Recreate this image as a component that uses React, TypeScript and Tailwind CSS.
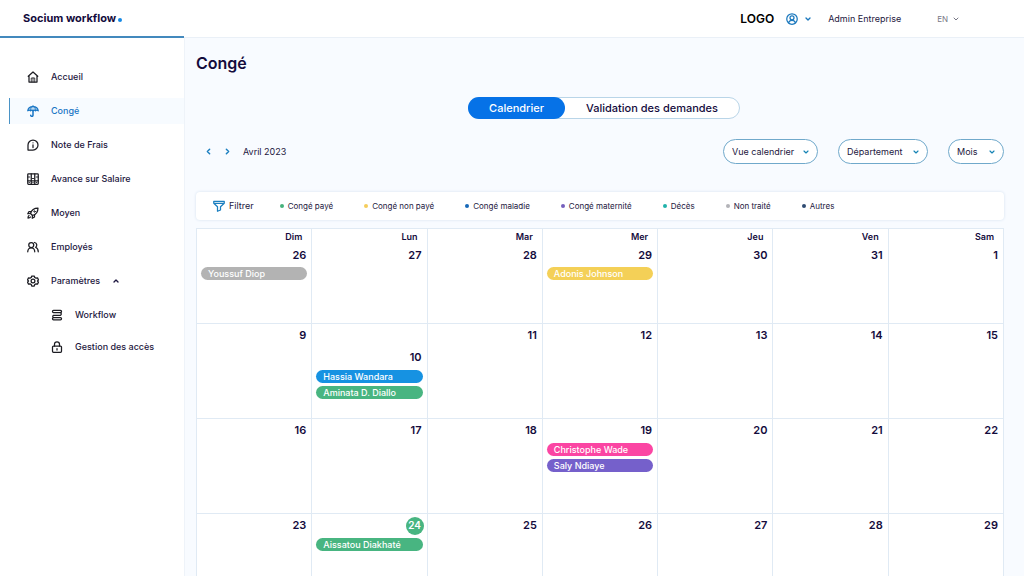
import type { ReactNode } from "react";
import { ChevronDown, ChevronLeft, ChevronRight, ChevronUp } from "lucide-react";

function Icon({ children, className = "size-3" }: { children: ReactNode; className?: string }) {
  return (
    <svg
      viewBox="0 0 24 24"
      className={`shrink-0 ${className}`}
      fill="none"
      stroke="currentColor"
      strokeWidth="2.5"
      strokeLinecap="round"
      strokeLinejoin="round"
      aria-hidden="true"
    >
      {children}
    </svg>
  );
}

const HomeIcon = (
  <Icon>
    <path d="M2.500 10.500 12 2l9.500 8.500M4 9.500V22h16V9.500" />
    <path d="M8.500 22v-8h7v8M12 14v8" strokeWidth="1.700" />
  </Icon>
);
const UmbrellaIcon = (
  <Icon>
    <path
      d="M12 3C6.500 3 2 6.500 1.500 11.500c2-1.500 4-1.500 5.500 0 1.500-1.500 3.500-1.500 5 0 1.500-1.500 3.500-1.500 5 0 1.500-1.500 3.500-1.500 5.500 0C22 6.500 17.500 3 12 3Z"
      fill="currentColor"
      fillOpacity="0.25"
    />
    <path d="M12 1v2M9 4c-1.500 2-2 4.500-2 7M15 4c1.500 2 2 4.500 2 7" strokeWidth="1.800" />
    <path d="M12 11v9.500a2.300 2.300 0 0 1-4.600 0" strokeWidth="3" />
  </Icon>
);
const NoteIcon = (
  <Icon>
    <path d="M2 22V12a10 10 0 1 1 10 10Z" />
    <path d="M12 11.500V17M12 7.500v.2" />
  </Icon>
);
const AbacusIcon = (
  <Icon>
    <rect x="1.500" y="1.500" width="21" height="21" rx="1.500" />
    <path d="M8.500 1.500v21M15.500 1.500v21M1.500 15.500h21" />
    <path d="M1.500 8h4M10.500 11h3M18.500 8h4M4 19h1M11.500 19h1M18.500 19h1" strokeWidth="1.800" />
  </Icon>
);
const RocketIcon = (
  <Icon>
    <path d="M7 13C9 6 14 2 22 2c0 8-4 13-11 15Z" />
    <path d="M8.500 9H4l-2.500 4.500L7 13M15 15.500V20l-4.500 2.500L11 17" />
    <path d="M4 17c-1.500 1-2 3-2 5 2 0 4-.5 5-2" />
    <circle cx="15" cy="9" r="1.500" strokeWidth="1.800" />
  </Icon>
);
const PeopleIcon = (
  <Icon>
    <circle cx="8.500" cy="8" r="5" />
    <path d="M1.500 21.500c0-4 3-8 7-8s7 4 7 8M15 3a5.200 5.200 0 0 1 2.200 9.500c3.300 1.500 5.300 5 5.300 9" />
  </Icon>
);
const GearIcon = (
  <Icon>
    <path d="M9.500 2h5l1 3 2.500 1.300 3-.5 2 4L21 12l2 2.200-2 4-3-.5-2.500 1.300-1 3h-5l-1-3L6 17.700l-3 .5-2-4L3 12 1 9.800l2-4 3 .5L8.500 5Z" />
    <circle cx="12" cy="12" r="3.800" />
  </Icon>
);
const FlowIcon = (
  <Icon>
    <rect x="3" y="2.500" width="18" height="4.500" rx="2" />
    <path d="M19 7c2 1.500 2 4 0 5.500H5c-2 1.500-2 3.500 0 4.500" />
    <rect x="3" y="17" width="18" height="4.500" rx="2" />
  </Icon>
);
const LockIcon = (
  <Icon>
    <rect x="3" y="10" width="18" height="12.500" rx="2" />
    <path d="M7 10V6.500a5 5 0 0 1 10 0V10M12 15v3" />
  </Icon>
);

const navItems = [
  { label: "Accueil", icon: HomeIcon },
  { label: "Congé", icon: UmbrellaIcon, active: true },
  { label: "Note de Frais", icon: NoteIcon },
  { label: "Avance sur Salaire", icon: AbacusIcon },
  { label: "Moyen", icon: RocketIcon },
  { label: "Employés", icon: PeopleIcon },
];

const subItems = [
  { label: "Workflow", icon: FlowIcon },
  { label: "Gestion des accès", icon: LockIcon },
];

const legend = [
  { label: "Congé payé", dot: "bg-[#46b17b]" },
  { label: "Congé non payé", dot: "bg-[#f5cd5b]" },
  { label: "Congé maladie", dot: "bg-[#1668b8]" },
  { label: "Congé maternité", dot: "bg-[#7560bd]" },
  { label: "Décès", dot: "bg-[#20b2aa]" },
  { label: "Non traité", dot: "bg-[#b3b3b8]" },
  { label: "Autres", dot: "bg-[#2f4b72]" },
];

const weekdays = ["Dim", "Lun", "Mar", "Mer", "Jeu", "Ven", "Sam"];

type Leave = { name: string; color: string };
type Day = { n: number; leaves?: Leave[]; today?: boolean; low?: boolean };

const weeks: Day[][] = [
  [
    { n: 26, leaves: [{ name: "Youssuf Diop", color: "bg-[#b3b3b3]" }] },
    { n: 27 },
    { n: 28 },
    { n: 29, leaves: [{ name: "Adonis Johnson", color: "bg-[#f4d057]" }] },
    { n: 30 },
    { n: 31 },
    { n: 1 },
  ],
  [
    { n: 9 },
    {
      n: 10,
      low: true,
      leaves: [
        { name: "Hassia Wandara", color: "bg-[#1692e2]" },
        { name: "Aminata D. Diallo", color: "bg-[#48b581]" },
      ],
    },
    { n: 11 },
    { n: 12 },
    { n: 13 },
    { n: 14 },
    { n: 15 },
  ],
  [
    { n: 16 },
    { n: 17 },
    { n: 18 },
    {
      n: 19,
      leaves: [
        { name: "Christophe Wade", color: "bg-[#fb45a3]" },
        { name: "Saly Ndiaye", color: "bg-[#7560cb]" },
      ],
    },
    { n: 20 },
    { n: 21 },
    { n: 22 },
  ],
  [
    { n: 23 },
    { n: 24, today: true, leaves: [{ name: "Aissatou Diakhaté", color: "bg-[#48b581]" }] },
    { n: 25 },
    { n: 26 },
    { n: 27 },
    { n: 28 },
    { n: 29 },
  ],
];

function FilterSelect({ label, options, width }: { label: string; options: string[]; width: string }) {
  return (
    <div className={`relative ${width}`}>
      <select
        aria-label={label}
        className="block h-[25px] w-full appearance-none rounded-full border border-[#70a9cb] bg-white pr-4 pl-2 text-[9px] text-[#1d1740]"
      >
        {options.map((o) => (
          <option key={o}>{o}</option>
        ))}
      </select>
      <ChevronDown
        className="pointer-events-none absolute inset-y-0 right-2 my-auto size-2 text-[#1583b5]"
        strokeWidth={3.5}
      />
    </div>
  );
}

function Header() {
  return (
    <header className="flex h-[38px] shrink-0 border-b border-[#eaf0f7] bg-white">
      <div className="-mb-px flex w-[184px] shrink-0 items-center gap-[2px] border-b-2 border-[#4389bd] pl-[23px]">
        <span className="text-[11px] font-bold text-[#140b3c]">Socium workflow</span>
        <span className="mt-1 size-1 rounded-full bg-[#1689e5]" />
      </div>
      <div className="flex flex-1 items-center justify-end pr-16">
        <span className="text-[12px] font-semibold text-black">LOGO</span>
        <button type="button" aria-label="Compte" className="ml-3 flex items-center gap-[6px] text-[#1b78bd]">
          <Icon>
            <circle cx="12" cy="12" r="10.500" />
            <circle cx="12" cy="9.500" r="4" />
            <path d="M5 19.500c1-3.500 3.500-5 7-5s6 1.500 7 5" />
          </Icon>
          <ChevronDown className="size-2" strokeWidth={4} />
        </button>
        <span className="ml-4 text-[9px] text-[#1d1740]">Admin Entreprise</span>
        <button type="button" className="ml-9 flex items-center gap-1 text-[8px] text-[#777785]">
          EN
          <ChevronDown className="size-2" strokeWidth={3} />
        </button>
      </div>
    </header>
  );
}

function Sidebar() {
  return (
    <nav className="w-[185px] shrink-0 border-r border-[#eef3f9] bg-white pt-[26px] pl-[9px] text-[9px] font-medium text-[#1d1740]">
      <ul className="flex flex-col gap-2">
        {navItems.map((item) => (
          <li key={item.label}>
            <a
              href="#"
              className={`flex h-[26px] items-center gap-3 border-l pl-[17px] ${
                item.active ? "border-[#4a93c6] bg-[#f7fbff] text-[#1976c5]" : "border-transparent"
              }`}
            >
              <span className={item.active ? "" : "text-[#1c1c22]"}>{item.icon}</span>
              {item.label}
            </a>
          </li>
        ))}
        <li>
          <button type="button" aria-expanded="true" className="flex h-[26px] w-full items-center gap-3 pl-[18px]">
            <span className="text-[#1c1c22]">{GearIcon}</span>
            Paramètres
            <ChevronUp className="size-2" strokeWidth={4} />
          </button>
          <ul className="mt-2 flex flex-col gap-[6px]">
            {subItems.map((item) => (
              <li key={item.label}>
                <a href="#" className="flex h-[26px] items-center gap-3 pl-[42px]">
                  <span className="text-[#1c1c22]">{item.icon}</span>
                  {item.label}
                </a>
              </li>
            ))}
          </ul>
        </li>
      </ul>
    </nav>
  );
}

function DayCell({ day }: { day: Day }) {
  return (
    <td className="border border-[#e0eaf4] px-1 pt-[3px] align-top">
      <div className={`flex h-[18px] items-center justify-end ${day.low ? "mt-[22px]" : ""}`}>
        {day.today ? (
          <span className="-mr-px flex size-[18px] items-center justify-center rounded-full bg-[#48b581] text-[10px] font-semibold text-white">
            {day.n}
          </span>
        ) : (
          <span className="pr-px text-[11px] font-semibold">{day.n}</span>
        )}
      </div>
      {day.leaves && (
        <ul className="mt-[3px] flex flex-col gap-[3px]">
          {day.leaves.map((l) => (
            <li
              key={l.name}
              className={`h-[13px] truncate rounded-full pl-[7px] text-[9px] leading-[13px] font-medium text-white ${l.color}`}
            >
              {l.name}
            </li>
          ))}
        </ul>
      )}
    </td>
  );
}

function Calendar() {
  return (
    <table className="mt-2 w-full table-fixed border-collapse border border-[#e0eaf4] bg-white text-[#140b3c]">
      <thead>
        <tr>
          {weekdays.map((d) => (
            <th
              key={d}
              scope="col"
              className="border-x border-[#e0eaf4] pt-[2px] pr-[9px] text-right text-[9px] leading-3 font-semibold"
            >
              {d}
            </th>
          ))}
        </tr>
      </thead>
      <tbody>
        {weeks.map((week, i) => (
          <tr key={i} className={i === 0 ? "h-20 [&>td]:border-t-0" : "h-[95px]"}>
            {week.map((day) => (
              <DayCell key={day.n} day={day} />
            ))}
          </tr>
        ))}
      </tbody>
    </table>
  );
}

export default function App() {
  return (
    <div className="flex h-screen flex-col font-['Inter','Liberation_Sans',sans-serif]">
      <Header />
      <div className="flex min-h-0 flex-1">
        <Sidebar />
        <main className="min-w-0 flex-1 overflow-y-auto bg-[#f8fbff] pt-[13px] pr-5 pl-[11px] [scrollbar-width:none]">
          <h1 className="text-[16px] leading-6 font-semibold text-[#140b3c]">Congé</h1>

          <div className="mt-[22px] flex justify-center pl-2">
            <div className="flex h-[22px] rounded-full border border-[#b9d5e8] bg-white text-[11px] font-medium text-[#140b3c]">
              <button type="button" className="-my-px -ml-px w-[97px] rounded-full bg-[#0672e7] text-white">
                Calendrier
              </button>
              <button type="button" className="px-[21px]">
                Validation des demandes
              </button>
            </div>
          </div>

          <div className="mt-5 flex items-center">
            <div className="flex items-center gap-[10px] pl-2 text-[#1b7fc0]">
              <button type="button" aria-label="Mois précédent">
                <ChevronLeft className="size-[9px]" strokeWidth={4} />
              </button>
              <button type="button" aria-label="Mois suivant">
                <ChevronRight className="size-[9px]" strokeWidth={4} />
              </button>
            </div>
            <span className="ml-[11px] text-[9px] text-[#1d1740]">Avril 2023</span>
            <div className="ml-auto flex gap-5">
              <FilterSelect label="Vue" options={["Vue calendrier", "Vue liste"]} width="w-[95px]" />
              <FilterSelect label="Département" options={["Département"]} width="w-[90px]" />
              <FilterSelect label="Période" options={["Mois", "Semaine"]} width="w-14" />
            </div>
          </div>

          <div className="mt-7 flex h-7 items-center rounded-sm bg-white pl-[17px] text-[#1d1740] shadow-[0_0_3px_#d3e1ee]">
            <button type="button" className="flex items-center gap-1 text-[9px]">
              <Icon className="size-3 text-[#1b7fc0]">
                <path d="M1.500 2.500h21v4l-7.500 7V20l-6 2.500v-9l-7.500-7ZM2 6.500h20" />
              </Icon>
              Filtrer
            </button>
            <ul className="ml-[26px] flex gap-[31px] text-[8px]">
              {legend.map((l) => (
                <li key={l.label} className="flex items-center gap-1 whitespace-nowrap">
                  <span className={`size-1 rounded-full ${l.dot}`} />
                  {l.label}
                </li>
              ))}
            </ul>
          </div>

          <Calendar />
        </main>
      </div>
    </div>
  );
}
